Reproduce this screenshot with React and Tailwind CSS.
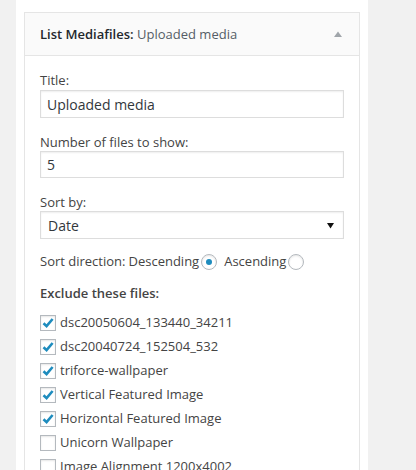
import { useState } from "react";

const FILES = [
  { id: 1, name: "dsc20050604_133440_34211", checked: true },
  { id: 2, name: "dsc20040724_152504_532", checked: true },
  { id: 3, name: "triforce-wallpaper", checked: true },
  { id: 4, name: "Vertical Featured Image", checked: true },
  { id: 5, name: "Horizontal Featured Image", checked: true },
  { id: 6, name: "Unicorn Wallpaper", checked: false },
  { id: 7, name: "Image Alignment 1200x4002", checked: false },
];

function Radio({ on, onClick }) {
  return (
    <button
      onClick={onClick}
      className="w-4 h-4 rounded-full border border-[#b4b9be] bg-white flex items-center justify-center shadow-[inset_0_1px_2px_rgba(0,0,0,0.1)]"
    >
      {on && <span className="w-[6px] h-[6px] rounded-full bg-[#1e8cbe]" />}
    </button>
  );
}

function Checkbox({ on, onClick }) {
  return (
    <button
      onClick={onClick}
      className="w-4 h-4 shrink-0 border border-[#b4b9be] bg-white flex items-center justify-center shadow-[inset_0_1px_2px_rgba(0,0,0,0.1)]"
    >
      {on && (
        <svg width="14" height="14" viewBox="0 0 14 14" fill="none">
          <path d="M2.5 7.2L5.6 10.2L11.6 3" stroke="#1e8cbe" strokeWidth="2.6" strokeLinejoin="miter" />
        </svg>
      )}
    </button>
  );
}

export default function App() {
  const [title, setTitle] = useState("Uploaded media");
  const [count, setCount] = useState("5");
  const [dir, setDir] = useState("desc");
  const [files, setFiles] = useState(FILES);

  function toggle(id) {
    setFiles(files.map(f => (f.id === id ? { ...f, checked: !f.checked } : f)));
  }

  return (
    <div className="h-[470px] overflow-hidden bg-[#f1f1f1] text-[13px] text-[#444] font-['Open_Sans',sans-serif]">
      <div className="ml-4 w-[352px] h-full bg-white px-2 pt-3">
        <div className="border border-[#e5e5e5]">
          {/* Header */}
          <div className="h-[43px] flex items-center justify-between pl-[15px] pr-[17px] bg-[#fafafa] border-b border-[#e5e5e5]">
            <p className="text-[13px] text-[#23282d] leading-none">
              <span className="font-semibold">List Mediafiles:</span>{" "}
              <span className="text-[#555d66]">Uploaded media</span>
            </p>
            <svg width="8" height="6" viewBox="0 0 8 6">
              <path d="M0 6L4 0.5L8 6Z" fill="#a0a5aa" />
            </svg>
          </div>

          {/* Body */}
          <div className="px-[15px] pt-[15px] pb-4">
            <label className="block leading-[18px]">Title:</label>
            <input
              value={title}
              onChange={e => setTitle(e.target.value)}
              className="mt-px w-full h-[28px] px-[6px] border border-[#ddd] text-[14px] text-[#32373c] outline-none shadow-[inset_0_1px_2px_rgba(0,0,0,0.07)]"
            />

            <label className="block mt-[15px] leading-[18px]">Number of files to show:</label>
            <input
              value={count}
              onChange={e => setCount(e.target.value)}
              className="w-full h-[27px] px-[6px] border border-[#ddd] text-[14px] text-[#32373c] outline-none shadow-[inset_0_1px_2px_rgba(0,0,0,0.07)]"
            />

            <label className="block mt-[15px] leading-[18px]">Sort by:</label>
            <div className="w-full h-[28px] pl-[7px] pr-[9px] flex items-center justify-between border border-[#ddd] text-[14px] text-[#32373c] shadow-[inset_0_1px_2px_rgba(0,0,0,0.07)]">
              <span>Date</span>
              <svg width="7" height="7" viewBox="0 0 7 7">
                <path d="M0 1H7L3.5 6.5Z" fill="#111" />
              </svg>
            </div>

            <div className="mt-[14px] h-[18px] flex items-center">
              <span>Sort direction:</span>
              <span className="ml-[3px]">Descending</span>
              <span className="ml-[2px]">
                <Radio on={dir === "desc"} onClick={() => setDir("desc")} />
              </span>
              <span className="ml-[7px]">Ascending</span>
              <span className="ml-[2px]">
                <Radio on={dir === "asc"} onClick={() => setDir("asc")} />
              </span>
            </div>

            <p className="mt-[13px] leading-[18px] font-semibold">Exclude these files:</p>

            <div className="mt-[13px] flex flex-col gap-2">
              {files.map(f => (
                <div key={f.id} className="h-4 flex items-center gap-1">
                  <Checkbox on={f.checked} onClick={() => toggle(f.id)} />
                  <span className="whitespace-nowrap">{f.name}</span>
                </div>
              ))}
            </div>
          </div>
        </div>
      </div>
    </div>
  );
}
